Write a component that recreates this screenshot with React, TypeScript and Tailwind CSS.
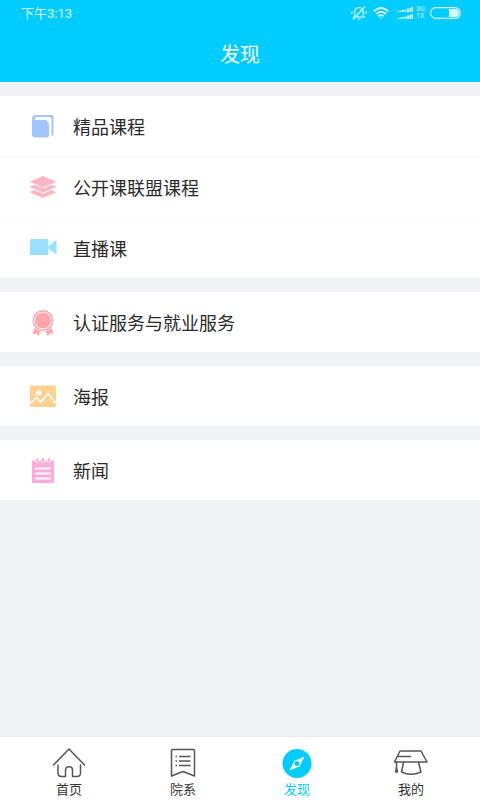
import type { ReactNode } from 'react';

type Entry = { label: string; icon: ReactNode };

const svg = 'block size-7';

const BookIcon = () => (
  <svg viewBox="0 0 28 28" className={svg} aria-hidden="true">
    <path d="M7 3H23Q24.500 3 24.500 4.500V22Q24.500 24 22.500 24H3V7Q3 3 7 3Z" fill="#a3c5ff" />
    <path d="M6 8Q5.500 5 8 5H20Q22.500 5 22.500 7.500V26H18V8Z" fill="#fff" />
    <path d="M3 7Q4 10 7.500 10H18Q20 10 20 12V23Q20 25.500 17.500 25.500H6Q3 25.500 3 22.500Z" fill="#a3c5ff" />
  </svg>
);

const LayersIcon = () => (
  <svg viewBox="0 0 28 28" className={svg} fill="#ffb5c1" aria-hidden="true">
    <path d="M14 3 27.500 8.700 14 14.300.500 8.700Z" />
    <path d="M.500 14 5.500 11.800 14 15.500 22.500 11.800 27.500 14 14 19.600Z" />
    <path d="M.500 19.300 5.500 17.100 14 20.800 22.500 17.100 27.500 19.300 14 25Z" />
  </svg>
);

const VideoIcon = () => (
  <svg viewBox="0 0 28 28" className={svg} fill="#99dfff" aria-hidden="true">
    <rect x="1" y="5" width="18.500" height="16" rx="1.500" />
    <path d="M19.500 12 27.500 6V20.500L19.500 14.500Z" />
  </svg>
);

const MedalIcon = () => (
  <svg viewBox="0 0 28 28" className={svg} aria-hidden="true">
    <path
      d="M6.500 17 3.500 26 7 25.200 9.500 28 12 22H16L18.500 28 21 25.200 24.500 26 21.500 17Z"
      fill="#ffa6aa"
    />
    <circle cx="14" cy="12.500" r="11" fill="#fff" />
    <circle cx="14" cy="12.500" r="9.700" fill="none" stroke="#ffa6aa" strokeWidth="1.500" />
    <circle cx="14" cy="12.500" r="8" fill="#ffa6aa" />
  </svg>
);

const PosterIcon = () => (
  <svg viewBox="0 0 28 28" className={svg} aria-hidden="true">
    <rect x="1" y="3.500" width="26" height="21.500" rx="1.500" fill="#ffd08f" />
    <circle cx="9.500" cy="11" r="2.700" fill="#fff" />
    <path d="M1 21.500 7.500 15.500 12 20 19 11.500 27 21.500" fill="none" stroke="#fff" strokeWidth="1.600" />
  </svg>
);

const NewsIcon = () => (
  <svg viewBox="0 0 28 28" className={svg} aria-hidden="true">
    <path d="M3 4.500H25V26Q25 27 24 27H4Q3 27 3 26Z" fill="#ffaadd" />
    <path d="M8.300 3V5.500M14 3V5.500M19.700 3V5.500" stroke="#fff" strokeWidth="3.600" strokeLinecap="round" />
    <path d="M8.300 3V5.500M14 3V5.500M19.700 3V5.500" stroke="#ffaadd" strokeWidth="2" strokeLinecap="round" />
    <path d="M7 12.500H21M7 17.500H21M7 22.500H21" stroke="#fff" strokeWidth="2" strokeLinecap="round" />
  </svg>
);

const groups: Entry[][] = [
  [
    { label: '精品课程', icon: <BookIcon /> },
    { label: '公开课联盟课程', icon: <LayersIcon /> },
    { label: '直播课', icon: <VideoIcon /> },
  ],
  [{ label: '认证服务与就业服务', icon: <MedalIcon /> }],
  [{ label: '海报', icon: <PosterIcon /> }],
  [{ label: '新闻', icon: <NewsIcon /> }],
];

const tab = 'block h-8 w-9';

const HomeIcon = () => (
  <svg viewBox="0 0 36 32" className={tab} fill="none" stroke="#555" strokeWidth="1.500" strokeLinecap="round" strokeLinejoin="round" aria-hidden="true">
    <path d="M2.500 18 18 2 33.500 18" />
    <path d="M7 18V26Q7 29.500 10.500 29.500H14.500V23Q14.500 19.800 18 19.800Q21.500 19.800 21.500 23V29.500H26Q29.500 29.500 29.500 26V18" />
  </svg>
);

const FacultyIcon = () => (
  <svg viewBox="0 0 36 32" className={tab} fill="none" stroke="#555" strokeWidth="1.500" strokeLinejoin="round" aria-hidden="true">
    <path d="M7.500 2.500H28.500Q29.500 2.500 29.500 3.500V29L18 24.500 6.500 29V3.500Q6.500 2.500 7.500 2.500Z" />
    <path d="M14 9.500H25.500M14 14H25.500M14 18.500H25.500M10.500 9.500H12M10.500 14H12M10.500 18.500H12" />
  </svg>
);

const CompassIcon = () => (
  <svg viewBox="0 0 36 32" className={tab} aria-hidden="true">
    <circle cx="18" cy="16.500" r="14.500" fill="#00ccff" />
    <path d="M25.500 9.500 20.700 19.200 10.500 23.500 15.300 14Z" fill="#fff" />
    <circle cx="18" cy="16.600" r="2.500" fill="#00ccff" />
  </svg>
);

const CapIcon = () => (
  <svg viewBox="0 0 36 32" className={tab} fill="none" stroke="#555" strokeWidth="1.500" strokeLinecap="round" strokeLinejoin="round" aria-hidden="true">
    <path d="M7 4H28L34 15H1.500Z" />
    <path d="M5 9.500H17.500M3.500 15V22" />
    <path d="M10.500 15.500 8.500 25Q18 29.500 28 25L25.500 15.500" />
    <path d="M3.500 21 2.500 25H4.500Z" fill="#555" />
  </svg>
);

const tabs = [
  { label: '首页', icon: <HomeIcon />, active: false },
  { label: '院系', icon: <FacultyIcon />, active: false },
  { label: '发现', icon: <CompassIcon />, active: true },
  { label: '我的', icon: <CapIcon />, active: false },
];

function StatusBar() {
  return (
    <div className="flex h-[26px] items-center justify-between pr-[19px] pl-[21px] font-[Roboto,'Noto_Sans_CJK_SC',sans-serif] text-[13px] leading-none text-white/85">
      <span>下午3:13</span>
      <div className="flex items-center">
        <svg viewBox="0 0 16 16" className="mr-1.5 size-4" fill="none" stroke="currentColor" strokeWidth="1.200" aria-hidden="true">
          <path d="M2 12H14M3.800 12V6.500Q3.800 3 8 2.500Q12.200 3 12.200 6.500V12M6.500 14H9.500M1 6V9M15 6V9M14 1.500 2 14.500" />
        </svg>
        <svg viewBox="0 0 16 14" className="mr-2 h-3.5 w-4" fill="none" stroke="currentColor" strokeWidth="1.700" aria-hidden="true">
          <path d="M.700 5.500Q8-1.500 15.300 5.500M3 8Q8 3.500 13 8M5.300 10.300Q8 8 10.700 10.300" />
          <path d="M6.500 11.500H9.500L8 13Z" fill="currentColor" stroke="none" />
        </svg>
        <svg viewBox="0 0 16 12" className="mr-[3px] h-3 w-4" fill="none" stroke="currentColor" strokeWidth="1.800" aria-hidden="true">
          <path d="M1 5V4M3.500 5V3.500M6 5V3M8.500 5V2.500M11 5V1.500M13.500 5V.700M15.700 5V0M1 12V11M3.500 12V10.500M6 12V10M8.500 12V9.500M11 12V8.500M13.500 12V7.700M15.700 12V7" />
        </svg>
        <div className="mr-[5px] flex w-[9px] flex-col text-[7px] leading-[7px] text-white/80">
          <span>3G</span>
          <span>1X</span>
        </div>
        <svg viewBox="0 0 31 12" className="h-3 w-[31px]" aria-hidden="true">
          <rect x=".600" y=".600" width="29.800" height="10.800" rx="5.400" fill="none" stroke="currentColor" strokeWidth="1.200" />
          <path d="M19 2H25Q29 2 29 6T25 10H19Z" fill="currentColor" />
        </svg>
      </div>
    </div>
  );
}

export default function App() {
  return (
    <div className="flex min-h-screen flex-col bg-[#eff1f5] font-['Noto_Sans_CJK_SC',sans-serif] text-[#2b2b2b]">
      <header className="bg-[#00ccff] text-white">
        <StatusBar />
        <h1 className="flex h-14 items-center justify-center text-[20px] leading-7">发现</h1>
      </header>

      <main className="flex flex-1 flex-col gap-3.5 py-3.5">
        {groups.map((group) => (
          <ul key={group[0].label} className="divide-y divide-[#f5f5f5] bg-white">
            {group.map((entry) => (
              <li key={entry.label}>
                <button type="button" className="flex h-15 w-full items-center gap-4 pl-[29px] text-left text-[18px] leading-6">
                  {entry.icon}
                  <span>{entry.label}</span>
                </button>
              </li>
            ))}
          </ul>
        ))}
      </main>

      <nav className="grid h-16 grid-cols-4 border-t border-[#e9eaee] bg-white px-3">
        {tabs.map((item) => (
          <button
            key={item.label}
            type="button"
            aria-current={item.active ? 'page' : undefined}
            className={`flex flex-col items-center pt-2.5 text-[13px] leading-5 ${item.active ? 'text-[#00ccff]' : 'text-[#333]'}`}
          >
            {item.icon}
            <span>{item.label}</span>
          </button>
        ))}
      </nav>
    </div>
  );
}
